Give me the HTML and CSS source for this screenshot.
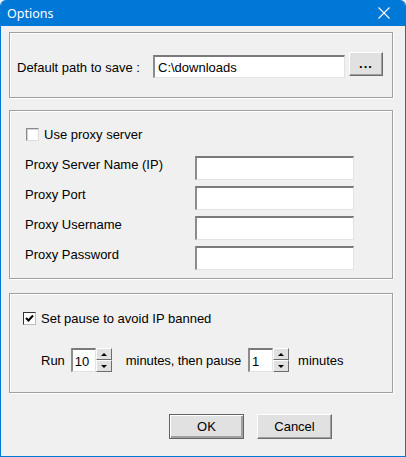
FILE: index.html
```html
<!DOCTYPE html>
<html lang="en">
<head>
  <meta charset="UTF-8">
  <title>Options</title>
  <link rel="stylesheet" href="styles.css">
</head>
<body>
  <div class="window">
    <div class="titlebar">
      <span class="title">Options</span>
      <svg class="close" width="12" height="12" viewBox="0 0 12 12">
        <path d="M0.5 0.5 L11.5 11.5 M11.5 0.5 L0.5 11.5" stroke="#fff" stroke-width="1.1"/>
      </svg>
    </div>

    <div class="client">
      <div class="group group-path">
        <span class="path-label">Default path to save :</span>
        <input class="field path-field" type="text" value="C:\downloads">
        <button class="btn browse">...</button>
      </div>

      <div class="group group-proxy">
        <label class="check-row">
          <span class="checkbox"></span>
          <span>Use proxy server</span>
        </label>
        <div class="proxy-grid">
          <span class="row-label">Proxy Server Name (IP)</span>
          <input class="field" type="text">
          <span class="row-label">Proxy Port</span>
          <input class="field" type="text">
          <span class="row-label">Proxy Username</span>
          <input class="field" type="text">
          <span class="row-label">Proxy Password</span>
          <input class="field" type="password">
        </div>
      </div>

      <div class="group group-pause">
        <label class="check-row">
          <span class="checkbox checked">
            <svg width="9" height="9" viewBox="0 0 9 9">
              <path d="M1 4 L3.5 6.5 L8 1.5" fill="none" stroke="#000" stroke-width="2"/>
            </svg>
          </span>
          <span>Set pause to avoid IP banned</span>
        </label>
        <div class="run-row">
          <span>Run</span>
          <div class="spin run-spin">
            <input class="field spin-field" type="text" value="10">
            <div class="spin-btns">
              <span class="spin-btn"><i class="arrow-up"></i></span>
              <span class="spin-btn"><i class="arrow-down"></i></span>
            </div>
          </div>
          <span class="then-label">minutes, then pause</span>
          <div class="spin pause-spin">
            <input class="field spin-field" type="text" value="1">
            <div class="spin-btns">
              <span class="spin-btn"><i class="arrow-up"></i></span>
              <span class="spin-btn"><i class="arrow-down"></i></span>
            </div>
          </div>
          <span class="unit-label">minutes</span>
        </div>
      </div>

      <div class="actions">
        <button class="btn btn-default">OK</button>
        <button class="btn">Cancel</button>
      </div>
    </div>
  </div>
</body>
</html>
```

FILE: styles.css
```css
body {
  margin: 0;
  padding: 0;
  background-color: #f0f0f0;
  font-family: "Liberation Sans", Arial, sans-serif;
  font-size: 13px;
  color: #000;
}

.window {
  width: 406px;
  height: 457px;
  box-sizing: border-box;
  border: 1px solid #0078d7;
  border-top: none;
  background-color: #f0f0f0;
  border-radius: 6px 6px 0 0;
  overflow: hidden;
}

.titlebar {
  height: 26px;
  background-color: #0078d7;
  display: flex;
  align-items: center;
  justify-content: space-between;
  padding: 0 15px 0 6px;
}

.title {
  font-family: "Noto Sans", "Open Sans", sans-serif;
  font-size: 12.5px;
  color: #fff;
  margin-top: 1px;
}

.client {
  padding: 6px 0 0 8px;
}

/* etched frame round each block of settings */
.group {
  width: 384px;
  box-sizing: border-box;
  border: 1px solid #a0a0a0;
  box-shadow: inset 1px 1px 0 #fff, 1px 1px 0 #fff;
}

.field {
  box-sizing: border-box;
  height: 24px;
  margin: 0;
  padding: 1px 3px 0;
  font-family: "Liberation Sans", Arial, sans-serif;
  font-size: 13px;
  background: #fff;
  border-style: solid;
  border-width: 2px 1px 1px 2px;
  border-color: #7a7a7a #e3e3e3 #e3e3e3 #8c8c8c;
  outline: none;
}

.btn {
  box-sizing: border-box;
  margin: 0;
  padding: 0;
  font-family: "Liberation Sans", Arial, sans-serif;
  font-size: 13px;
  color: #000;
  background: #e1e1e1;
  border-style: solid;
  border-width: 1px;
  border-color: #fff #6d6d6d #6d6d6d #fff;
  box-shadow: inset -1px -1px 0 #a0a0a0;
}

.group-path {
  height: 66px;
  display: flex;
  align-items: flex-start;
  padding-left: 7px;
}

.path-label {
  width: 136px;
  line-height: 16px;
  margin-top: 27px;
}

.path-field {
  width: 192px;
  height: 23px;
  margin-top: 22px;
  padding-left: 3px;
}

.browse {
  width: 34px;
  height: 24px;
  margin-top: 19px;
  margin-left: 4px;
  font-weight: bold;
  letter-spacing: 1px;
  line-height: 14px;
}

.group-proxy {
  height: 169px;
  margin-top: 12px;
  padding: 15px 0 0 15px;
}

.check-row {
  display: flex;
  align-items: center;
  height: 16px;
}

.checkbox {
  width: 13px;
  height: 13px;
  box-sizing: border-box;
  background: #fff;
  border-style: solid;
  border-width: 1px;
  border-color: #8a8a8a #dcdcdc #dcdcdc #8a8a8a;
  box-shadow: inset 1px 1px 0 #d4d4d4;
  margin-right: 5px;
  display: flex;
  align-items: center;
  justify-content: center;
}

.group-proxy .checkbox {
  margin-left: 1px;
}

.proxy-grid {
  display: grid;
  grid-template-columns: 170px 159px;
  row-gap: 6px;
  align-items: start;
  margin-top: 14px;
}

.row-label {
  line-height: 16px;
  padding-top: 1px;
}

.group-pause {
  height: 100px;
  margin-top: 14px;
  padding: 16px 0 0 13px;
}

.checked {
  border-color: #333 #bbb #bbb #333;
  box-shadow: none;
}

.run-row {
  display: flex;
  align-items: center;
  margin: 22px 0 0 18px;
  height: 24px;
}

.spin {
  display: flex;
  align-items: center;
}

.run-spin {
  margin-left: 6px;
}

.spin-field {
  width: 25px;
  height: 24px;
  padding-left: 2px;
}

.pause-spin {
  margin-left: 7px;
}

.then-label {
  margin-left: 14px;
  letter-spacing: -0.1px;
}

.unit-label {
  margin-left: 9px;
}

.spin-btns {
  display: flex;
  flex-direction: column;
  width: 16px;
  height: 24px;
}

.spin-btn {
  flex: 1;
  display: flex;
  align-items: center;
  justify-content: center;
  background: #e1e1e1;
  border-style: solid;
  border-width: 1px;
  border-color: #fff #6d6d6d #6d6d6d #fff;
}

.arrow-up,
.arrow-down {
  width: 0;
  height: 0;
  border-left: 3px solid transparent;
  border-right: 3px solid transparent;
}

.arrow-up {
  border-bottom: 3px solid #000;
}

.arrow-down {
  border-top: 3px solid #000;
}

.actions {
  display: flex;
  gap: 13px;
  margin: 21px 0 0 160px;
}

.actions .btn {
  width: 75px;
  height: 25px;
}

.btn-default {
  border-color: #646464;
  box-shadow: inset 1px 1px 0 #fff, inset -2px -2px 0 #a0a0a0;
}
```
